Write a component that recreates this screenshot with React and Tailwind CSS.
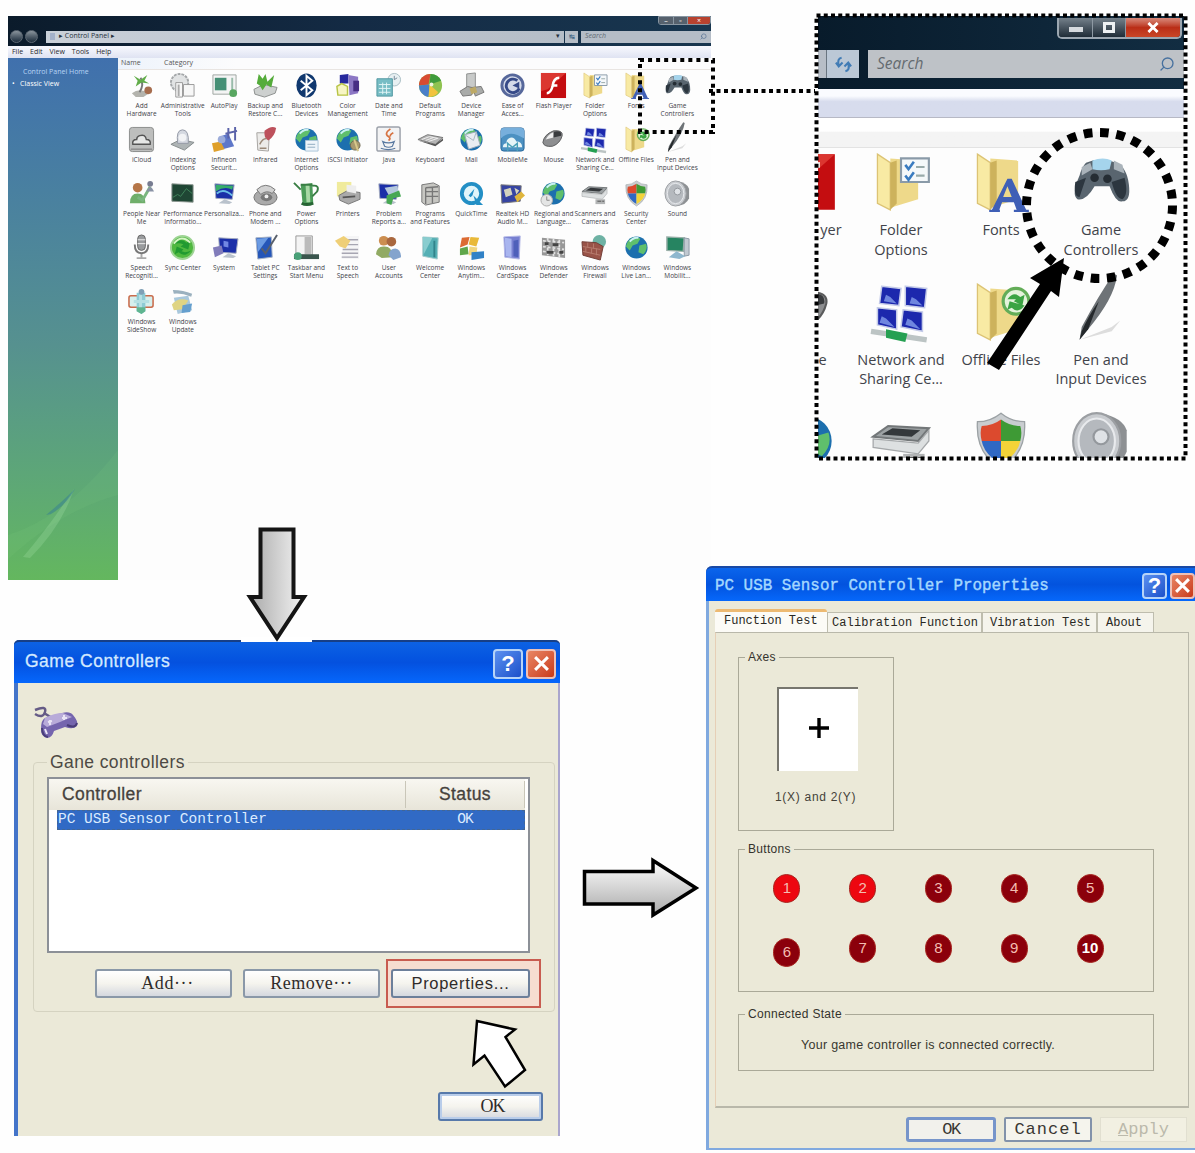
import { Search } from 'lucide-react';

const folder = (
  <>
    <path d="M9 3l13 1v18l-13 4z" fill="#eed98a" />
    <path d="M3 1l6 4v22l-6-3z" fill="#f8eaa4" stroke="#dcc374" strokeWidth=".6" />
    <path d="M9 5l3-1v20l-3 3z" fill="#cdb25c" />
  </>
);

const globe = (
  <>
    <circle cx="14" cy="14" r="11.5" fill="#1c6fae" />
    <path d="M8 5q6-4 10 0l-3 5-5 2-3 5-4-4q1-5 5-8zM17 12l7-2q2 6-3 11l-5-2z" fill="#5fbf6c" />
    <path d="M7 8q4-5 9-4" stroke="#c9f0f5" strokeWidth="2" fill="none" />
  </>
);

const monitor = (
  <>
    <path d="M4 4l20 1-2 15-17-1z" fill="#1b2fa8" stroke="#a4acc0" />
    <path d="M8 24l6-4 8 3-3 2z" fill="#b9c2cc" />
  </>
);

const shield = (
  <>
    <path d="M14 1q5 4 11 4 1 15-11 22Q2 20 3 5q6 0 11-4z" fill="#c9cdd0" stroke="#9ba1a4" strokeWidth=".6" />
    <path d="M14 4v10H5q-1-4 0-7 5 0 9-3z" fill="#dc4a2e" />
    <path d="M14 4v10h9q1-4 0-7-5 0-9-3z" fill="#3e9a35" />
    <path d="M5 14h9v11q-8-5-9-11z" fill="#2f68c4" />
    <path d="M23 14h-9v11q8-5 9-11z" fill="#f3d338" />
  </>
);

const person = (
  <>
    <circle cx="10" cy="8" r="5" fill="#b57648" />
    <path d="M2 24q0-10 8-10t8 10z" fill="#6fae6a" />
  </>
);

const box = (
  <>
    <path d="M5 5l12-2 6 3v17l-14 3-4-3z" fill="#c6c6c2" stroke="#777" />
    <path d="M9 8l13-1M9 12h13M9 17h13M9 8v17M16 8v16" stroke="#777" strokeWidth="1.4" />
  </>
);

const icons = {
  hardware: (
    <>
      <path d="M4 22q8-6 18 0l-6 4H8z" fill="#b3b3ad" />
      <path d="M12 21q5-8 1-15" stroke="#777" strokeWidth="2" fill="none" />
      <path d="M6 4l7 4 7-5-3 6 5 3-8-1-6 4 2-6z" fill="#62ad4a" />
      <circle cx="21" cy="19" r="4" fill="#a66c4d" />
    </>
  ),
  tools: (
    <>
      <circle cx="11" cy="11" r="9" fill="#e1e3e4" stroke="#a4a7a9" strokeWidth="2" strokeDasharray="3 1" />
      <path d="M7 11h7v15H7zM15 13h11v12H15z" fill="#f7f7f7" stroke="#999" />
      <path d="M10 13v12" stroke="#aaa" strokeWidth="2" />
    </>
  ),
  autoplay: (
    <>
      <path d="M2 3h24v20H2z" fill="#f4f4f4" stroke="#9da5a1" />
      <path d="M4 6h12v13H4z" fill="#458f75" />
      <path d="M22 6v14" stroke="#9ba" strokeWidth="2" />
      <circle cx="23" cy="22" r="4" fill="#58a660" />
    </>
  ),
  backup: (
    <>
      <path d="M2 18l10-5 14 3-2 6-11 4-10-3z" fill="#cdd0cf" stroke="#8b8f8e" />
      <path d="M7 2l4 5 3-5 2 8 7-7-3 13-5-3-4 6-3-5-3-2z" fill="#55ac3b" />
    </>
  ),
  bluetooth: (
    <>
      <ellipse cx="14" cy="14" rx="10.5" ry="12.5" fill="#10386f" />
      <path d="M8 9l12 10-6 5V4l6 5L8 19" stroke="#fff" strokeWidth="2" fill="none" />
    </>
  ),
  color: (
    <>
      <path d="M6 3l9-1v10H6z" fill="#26289c" />
      <path d="M15 3l10 2v17l-9 2z" fill="#8c77c4" />
      <path d="M20 9h6v11h-6z" fill="#472d84" />
      <path d="M3 15l5-3 6 3v9H4z" fill="#f7f5c5" stroke="#b8c446" strokeWidth="1.5" />
    </>
  ),
  date: (
    <>
      <circle cx="20" cy="8" r="6.5" fill="#e8f0f2" stroke="#a9bdc4" />
      <path d="M20 4v4l3-2" stroke="#789" fill="none" />
      <path d="M2 7h16v18H2z" fill="#77bdc5" stroke="#5298a1" />
      <path d="M4 13h12M4 17h12M4 21h12M8 11v12M12 11v12" stroke="#e2f5f6" />
    </>
  ),
  defaults: (
    <>
      <circle cx="14" cy="14" r="12" fill="#8fc350" />
      <path d="M14 2a12 12 0 0 0-12 12l10-1z" fill="#d94b32" />
      <path d="M2 14a12 12 0 0 0 10 12l1-13z" fill="#4a7fc9" />
      <path d="M12 26q8-1 10-5l-9-8z" fill="#f1c33e" />
      <path d="M14 2q8 0 11 7l-12 4z" fill="#3f9b3c" />
      <circle cx="15" cy="13" r="2" fill="#eef5dc" />
    </>
  ),
  device: (
    <>
      <path d="M9 2l9-1v15l-9 1z" fill="#c8cac9" stroke="#8e908f" />
      <path d="M2 20l8-5 8 2-4 7-9 1zM15 16l9-1 3 6-9 4z" fill="#a9aba9" stroke="#777" />
      <path d="M12 17l6-2 2 6-6 2z" fill="#bda965" />
    </>
  ),
  ease: (
    <>
      <circle cx="14" cy="14" r="11" fill="#d4dae9" stroke="#57689b" strokeWidth="3" />
      <path d="M19 9a7 7 0 1 0 2 8" fill="none" stroke="#364a88" strokeWidth="3" />
      <path d="M14 14l7-4v7z" fill="#364a88" />
    </>
  ),
  flash: (
    <>
      <path d="M1 1h26v26H1z" fill="#c40d10" />
      <path d="M1 1h26L8 18l-7 2z" fill="#db3630" />
      <path d="M20 6q-6 0-7 9-2 7-6 7M12 14h6" stroke="#fff" strokeWidth="2.6" fill="none" />
    </>
  ),
  folder: (
    <>
      {folder}
      <path d="M14 3h13v11H14z" fill="#f5f8fa" stroke="#8a9aa8" />
      <path d="M16 6l1.5 2L20 4.5M16 11l1.5 2L20 9.5" stroke="#3a7bc0" fill="none" strokeWidth="1.2" />
      <path d="M21 7h4M21 11h4" stroke="#9aa" />
    </>
  ),
  fonts: (
    <>
      {folder}
      <path d="M9.500 27.500l7.500-15h2l7 15h-4.500l-1.500-4h-5.500l-1.500 4zm5.500-6.500h4l-2-5z" fill="#3f5fb6" fillRule="evenodd" />
      <path d="M8.500 27.500h5M20 27.500h7" stroke="#3f5fb6" />
    </>
  ),
  game: (
    <>
      <path d="M7 5q7-3 14 0 5 2 6 10 1 8-3 8-3 1-6-7h-7q-4 7-8 6-3-2 1-11 1-4 3-6z" fill="#59656f" />
      <path d="M10 4q5-2 9 0l-1 4q-4 1-8 0z" fill="#a5d4ec" />
      <path d="M5 7l4-2 1 3-5 3zM20 4l4 2 1 4-5-2z" fill="#aab3ba" />
      <path d="M2 14l5-2-3 9q-3 0-2-7zM19 14l6-2q2 8-1 10-3 0-5-8z" fill="#2c363f" />
      <circle cx="11" cy="12" r="2" fill="#252d34" />
      <circle cx="17" cy="12.5" r="2" fill="#252d34" />
    </>
  ),
  cloud: (
    <>
      <rect x="1.5" y="1.5" width="25" height="25" rx="3" fill="#bdbebd" stroke="#898b8a" />
      <path d="M5 19h18q1-5-4-5-1-6-7-4-3 1-3 4-5 0-4 5z" fill="#e6e7e6" stroke="#555" strokeWidth="1.5" />
      <path d="M3 24h22" stroke="#777" />
    </>
  ),
  indexing: (
    <>
      <path d="M2 19l10-5 14 3-10 8z" fill="#aeb4b5" stroke="#858b8d" />
      <path d="M9 18q-2-14 5-14t6 14z" fill="#d4d8e0" stroke="#9499a6" />
      <circle cx="14" cy="12" r="4" fill="#f2f3f5" />
    </>
  ),
  secure: (
    <>
      <path d="M9 11l9-3 6 13-12 3z" fill="#5e77c9" />
      <path d="M18 2v11M25 1v14M15 8l12-3" stroke="#5a62a9" strokeWidth="2" />
      <path d="M1 18l9-2 4 8-11 3z" fill="#dfa02b" />
      <circle cx="11" cy="14" r="4" fill="#9cacda" />
    </>
  ),
  ehome: (
    <>
      <path d="M5 7h13l-1 19-11-1z" fill="#ecebe9" stroke="#a5a3a0" />
      <path d="M13 5q7-6 12-3-1 8-8 13-5-2-4-10z" fill="#bd515c" />
      <path d="M8 19q3-6 7-6M8 23h7" stroke="#987" fill="none" strokeWidth="1.5" />
    </>
  ),
  internet: (
    <>
      {globe}
      <path d="M13 15h13v11H13z" fill="#eef5fa" stroke="#aac5d8" />
      <path d="M15 19h8M15 22h8" stroke="#8eacc0" />
    </>
  ),
  iscsi: (
    <>
      {globe}
      <circle cx="22" cy="20" r="5" fill="#a99a6e" stroke="#6d6953" />
      <path d="M21 14l4 12" stroke="#d8c98b" strokeWidth="2" />
    </>
  ),
  java: (
    <>
      <rect x="2" y="1" width="24" height="25" rx="2" fill="#f3f3f4" stroke="#9ca1aa" strokeWidth="1.5" />
      <path d="M16 3q-7 5-2 8 3 2 0 4M19 7q-4 2-3 4" stroke="#d77342" fill="none" strokeWidth="1.8" />
      <path d="M8 16q6 3 12 0l-2 5q-4 2-8 0zM6 23q8 3 15 0" stroke="#5878a0" fill="none" strokeWidth="1.2" />
    </>
  ),
  keyboard: (
    <>
      <path d="M1 14l10-5 16 3-8 7z" fill="#b4b4b4" stroke="#777" />
      <path d="M5 14l8-3 9 2M9 15l8-3M12 16l9-3" stroke="#eee" fill="none" />
      <path d="M1 15l18 4 8-6v2l-8 6z" fill="#555" />
    </>
  ),
  mail: (
    <>
      {globe}
      <path d="M7 9l12-3 4 14-12 4z" fill="#e9edf2" stroke="#9eacba" />
      <path d="M7 9l9 6 3-9" fill="none" stroke="#a7b5c2" />
    </>
  ),
  mobile: (
    <>
      <rect x="2" y="2" width="24" height="24" rx="3" fill="#4c91c2" stroke="#27669a" />
      <path d="M2 13q9-10 24 0v-8q0-3-3-3H5q-3 0-3 3z" fill="#77afdc" />
      <path d="M4 22h20q0-6-6-6-3-6-8-3-3 2-2 5-4 0-4 4z" fill="#e6f4f7" />
      <path d="M9 26V18l5 4 5-4v8" stroke="#4aa0b8" fill="none" strokeWidth="1.5" />
    </>
  ),
  mouse: (
    <>
      <path d="M3 17q1-8 11-12 10-1 9 5-2 8-10 11-9 1-10-4z" fill="#8d8e90" stroke="#5a5b5c" />
      <path d="M6 14q2-5 9-8l-1 6z" fill="#eee" />
      <path d="M14 6q9-2 8 4l-8 2z" fill="#393b3e" />
    </>
  ),
  network: (
    <>
      <path d="M5 2l9 1-1 8-9-1zM16 2l10 1-1 9-9-1zM3 12l9 1v9l-9-2zM15 13l9 1v9l-10-2z" fill="#1c28ad" stroke="#c4cbe8" strokeWidth=".7" />
      <path d="M6 9l1-3 2 1 3 3zM18 10l1-3 2 1 3 3zM4 19l1-3 2 1 4 4zM16 20l1-3 2 1 4 4z" fill="#6f86df" />
      <path d="M0 23l26 4" stroke="#bcc4c4" strokeWidth="2.5" />
      <path d="M7 22l10 2-1 4-9-2z" fill="#26a052" />
    </>
  ),
  offline: (
    <>
      {folder}
      <circle cx="21" cy="9" r="6" fill="#e5f3dc" stroke="#63ad58" strokeWidth="1.5" />
      <path d="M17 8q3-4 6-1l2-1-1 5-4-2 1-1M25 11q-3 4-6 1l-2 1 1-4" fill="#3ba443" />
    </>
  ),
  pen: (
    <>
      <path d="M4 27l15-6 4-3-4 5z" fill="#ddd" />
      <path d="M20-4l1.500 1Q20 8 8 22l-4 5 1-6Q13 6 20-4z" fill="#6e7377" />
      <path d="M13 9q-5 7-8 14l-1 4 4-5z" fill="#24282b" />
    </>
  ),
  people: (
    <>
      {person}
      <path d="M10 18l5 3 8-14" stroke="#7ab77f" strokeWidth="3" fill="none" />
      <circle cx="23" cy="4" r="3" fill="#777c91" />
      <path d="M19 12q4-9 8 0" fill="#8992a5" />
    </>
  ),
  performance: (
    <>
      <path d="M3 4l22 1v18L3 22z" fill="#1f4634" stroke="#8b9690" />
      <path d="M4 18l5-3 3 2 6-8 6 5" stroke="#41845c" fill="none" />
    </>
  ),
  personalize: (
    <>
      {monitor}
      <path d="M5 5l18 1-1 4q-8-4-17 2z" fill="#37ad69" />
      <path d="M6 14q7-6 16 2" stroke="#69bce6" strokeWidth="2" fill="none" />
    </>
  ),
  phone: (
    <>
      <ellipse cx="14" cy="18" rx="12" ry="8" fill="#aaa" stroke="#777" />
      <path d="M5 10q9-9 19 0l-3 4q-6-4-12 1z" fill="#d1d1d1" stroke="#777" />
      <ellipse cx="15" cy="18" rx="6" ry="4" fill="#777" />
      <circle cx="15" cy="17" r="2" fill="#eee" />
    </>
  ),
  power: (
    <>
      <path d="M8 5l12-2 1 21-11 1z" fill="#4b9b58" />
      <path d="M13 5l4-1 1 19h-4z" fill="#a8d8a5" />
      <path d="M20 6q8-1 5 6l-5 5M8 10L1 3M8 5h12" stroke="#387d43" strokeWidth="2" fill="none" />
      <path d="M9 24q5 3 12 0" stroke="#276634" strokeWidth="3" />
    </>
  ),
  printers: (
    <>
      <path d="M3 2h15v15H3z" fill="#f0eb9c" />
      <path d="M5 16l9-5 13 2v7l-12 5-9-4z" fill="#aaa" stroke="#777" />
      <path d="M13 5l10 1v8l-10-2z" fill="#eee" />
      <path d="M9 18l13-1" stroke="#555" strokeWidth="2" />
    </>
  ),
  problem: (
    <>
      {monitor}
      <path d="M10 8l13-2 2 8-10 3z" fill="#b4c8dd" />
      <path d="M12 16l13-5 2 6-8 2-2 7-5-2z" fill="#48a854" />
    </>
  ),
  box,
  quicktime: (
    <>
      <circle cx="14" cy="14" r="10" fill="#e1f5fa" stroke="#238fc5" strokeWidth="4" />
      <path d="M11 16l6-7-2 7-2 2zM16 16l10 10h-7z" fill="#238fc5" />
    </>
  ),
  realtek: (
    <>
      <path d="M2 5l21 1-1 16-19 2z" fill="#3644a2" stroke="#777" />
      <path d="M5 10l7-2 2 7-7 3zM16 8l5 3-3 4z" fill="#d4d2bd" />
      <path d="M16 17l7-5 4 4-8 7z" fill="#dfb53c" />
    </>
  ),
  regional: (
    <>
      {globe}
      <circle cx="7" cy="21" r="6" fill="#e4e5e5" stroke="#aaa" />
      <path d="M7 17v4h3" stroke="#888" fill="none" />
    </>
  ),
  scanner: (
    <>
      <path d="M1 12l7-5 19 1-5 6z" fill="#9da2a4" stroke="#737779" />
      <path d="M5 11l5-3 13 1-4 3z" fill="#34383b" />
      <path d="M1 13l21 2 5-6v5l-5 6-21-3z" fill="#dde0e1" stroke="#a5a8aa" strokeWidth=".6" />
      <path d="M15 20h10v5H15z" fill="#b2b4b5" />
      <path d="M17 22h4M22 22h2" stroke="#555" />
    </>
  ),
  shield,
  sound: (
    <>
      <path d="M14 1q10 2 12 8v10q-3 7-12 8z" fill="#8d9093" />
      <ellipse cx="12" cy="14" rx="11" ry="13" fill="#c9ccd0" stroke="#9c9fa3" />
      <ellipse cx="12" cy="14" rx="8.5" ry="10.5" fill="#b5b9be" stroke="#e8eaed" />
      <circle cx="14" cy="12" r="3.5" fill="#dfe2e6" stroke="#94989d" />
    </>
  ),
  speech: (
    <>
      <path d="M14 20v6M9 25h10" stroke="#aaa" strokeWidth="2" />
      <path d="M7 11q0 9 7 9t7-9" fill="none" stroke="#777" strokeWidth="2" />
      <rect x="10" y="1" width="8" height="16" rx="4" fill="#9a9c9e" stroke="#666" />
      <path d="M10 6h8M10 10h8" stroke="#eee" />
    </>
  ),
  sync: (
    <>
      <circle cx="14" cy="14" r="12" fill="#4fb83f" stroke="#9ed494" strokeWidth="2" />
      <path d="M5 11q7-8 13-2l4-2-2 9-8-3 3-2q-5-3-10 0zM23 17q-7 8-13 2l-4 2 2-8 7 3-2 2q4 2 10-1z" fill="#219a31" />
      <path d="M5 10q8-10 17-1" stroke="#d5f4c5" fill="none" strokeWidth="2" />
    </>
  ),
  system: (
    <>
      <g transform="translate(4 0)">{monitor}</g>
      <path d="M2 14l9-2 2 8-9 4z" fill="#817cba" />
      <path d="M13 7l5 1v6l-5-1z" fill="#7187e3" />
    </>
  ),
  tablet: (
    <>
      <path d="M4 4l16-1 1 21-15 2z" fill="#2556b8" stroke="#aab5c7" />
      <path d="M5 5l12-1-11 15z" fill="#6b9be3" />
      <path d="M10 15l4 5L26 1" stroke="#59606b" strokeWidth="2" fill="none" />
    </>
  ),
  taskbar: (
    <>
      <path d="M3 2h17v20H3z" fill="#f4f4f4" stroke="#999" />
      <path d="M12 3h7v18h-7z" fill="#bbb" />
      <path d="M1 21h26v5H1z" fill="#3a554d" />
      <circle cx="5" cy="23" r="4" fill="#48a077" />
    </>
  ),
  text: (
    <>
      <path d="M10 2h16v24H8z" fill="#f5f5f6" />
      <path d="M13 6h12M12 11h13M9 16h16M8 20h17M8 24h17" stroke="#a7a6b2" strokeWidth="1.5" />
      <path d="M1 7l9-5 7 5-5 8-6-2z" fill="#efcf77" />
    </>
  ),
  users: (
    <>
      <circle cx="9" cy="7" r="5" fill="#cc8e50" />
      <circle cx="17" cy="8" r="5" fill="#a9673e" />
      <path d="M1 21q1-9 9-8 8 0 8 11l-11 1z" fill="#91aa63" />
      <path d="M14 22q1-7 7-7 6 1 6 9l-8 3z" fill="#84a4cd" />
    </>
  ),
  welcome: (
    <>
      <path d="M6 3l16 1-1 22-15-3z" fill="#55b0b5" stroke="#a7cccd" />
      <path d="M6 3l10 1-9 17z" fill="#89cdcf" />
      <path d="M18 7v17" stroke="#32848b" strokeWidth="2" />
    </>
  ),
  anytime: (
    <>
      <path d="M4 4l8-1-2 8-8 3z" fill="#dc6b32" />
      <path d="M13 3l9 1-3 9-8-2z" fill="#e9b939" />
      <path d="M2 15l8-2 1 8-9 1z" fill="#5fa74b" />
      <path d="M12 13l8 1-1 8h-8z" fill="#f0d57e" />
      <path d="M14 19l13-1v7l-13 2z" fill="#3181c6" />
    </>
  ),
  cardspace: (
    <>
      <path d="M5 3l17-1-1 24-15-2z" fill="#7780d1" stroke="#b4b8e6" />
      <path d="M6 4l7 1v19l-6-1z" fill="#a9b5ef" />
      <path d="M15 7l5-1v18l-5-1z" fill="#4e60ba" />
    </>
  ),
  defender: (
    <>
      <path d="M2 4l24 2v19L2 22z" fill="#989898" />
      <path d="M3 7l22 2M3 13l22 3M3 18l22 3M8 4v18M14 5v18M20 6v18" stroke="#e2e2e2" strokeDasharray="3 2" strokeWidth="1.8" />
      <path d="M5 10h4M13 11h6M7 19h7M20 19h4" stroke="#444" strokeWidth="3" />
    </>
  ),
  firewall: (
    <>
      <circle cx="19" cy="8" r="7" fill="#6eb2a4" />
      <path d="M1 8l15 1 7 4-3 14-18-5z" fill="#995348" stroke="#713c35" />
      <path d="M2 13l18 3M2 18l18 4M7 9v5M13 10v5M5 14v5M11 15v5M16 15v7" stroke="#b77c6e" />
    </>
  ),
  globe,
  mobility: (
    <>
      <path d="M3 3l18 1-1 14-17-1z" fill="#268461" stroke="#9ab0a9" strokeWidth="1.5" />
      <path d="M21 4l5 1v17l-5 1z" fill="#c1c9d1" stroke="#8d99a6" />
      <path d="M5 24l8-6 9 5-6 3z" fill="#8eb7ce" />
    </>
  ),
  sidebar: (
    <>
      <rect x="1" y="8" width="25" height="12" rx="2" fill="#d6efed" stroke="#c96c4c" strokeWidth="1.6" />
      <path d="M9 5h9v19l-4 3-5-3z" fill="#8ecbd4" />
      <path d="M6 14h16M13 7v18" stroke="#b6e0e3" strokeWidth="3" />
      <path d="M9 20h9v4l-4 3-5-3z" fill="#5fb590" />
      <circle cx="14" cy="4" r="3" fill="#7fa0b6" />
    </>
  ),
  update: (
    <>
      <path d="M4 2q11 0 20 4l-1 3Q13 5 5 6z" fill="#9bb1bf" />
      <path d="M5 10l15-2 4 15-15 4z" fill="#a9c8dc" />
      <path d="M3 17q7-8 17-4l-6 9-9 1z" fill="#dfd483" />
      <path d="M14 18l10-2-2 9-9 1z" fill="#659fce" />
    </>
  ),
};

const panelItems = [
  ['hardware', 'Add\nHardware'], ['tools', 'Administrative\nTools'], ['autoplay', 'AutoPlay'], ['backup', 'Backup and\nRestore C...'],
  ['bluetooth', 'Bluetooth\nDevices'], ['color', 'Color\nManagement'], ['date', 'Date and\nTime'], ['defaults', 'Default\nPrograms'],
  ['device', 'Device\nManager'], ['ease', 'Ease of\nAcces...'], ['flash', 'Flash Player'], ['folder', 'Folder\nOptions'],
  ['fonts', 'Fonts'], ['game', 'Game\nControllers'],
  ['cloud', 'iCloud'], ['indexing', 'Indexing\nOptions'], ['secure', 'Infineon\nSecurit...'], ['ehome', 'Infrared'],
  ['internet', 'Internet\nOptions'], ['iscsi', 'iSCSI Initiator'], ['java', 'Java'], ['keyboard', 'Keyboard'],
  ['mail', 'Mail'], ['mobile', 'MobileMe'], ['mouse', 'Mouse'], ['network', 'Network and\nSharing Ce...'],
  ['offline', 'Offline Files'], ['pen', 'Pen and\nInput Devices'],
  ['people', 'People Near\nMe'], ['performance', 'Performance\nInformatio...'], ['personalize', 'Personaliza...'], ['phone', 'Phone and\nModem ...'],
  ['power', 'Power\nOptions'], ['printers', 'Printers'], ['problem', 'Problem\nReports a...'], ['box', 'Programs\nand Features'],
  ['quicktime', 'QuickTime'], ['realtek', 'Realtek HD\nAudio M...'], ['regional', 'Regional and\nLanguage...'], ['scanner', 'Scanners and\nCameras'],
  ['shield', 'Security\nCenter'], ['sound', 'Sound'],
  ['speech', 'Speech\nRecogniti...'], ['sync', 'Sync Center'], ['system', 'System'], ['tablet', 'Tablet PC\nSettings'],
  ['taskbar', 'Taskbar and\nStart Menu'], ['text', 'Text to\nSpeech'], ['users', 'User\nAccounts'], ['welcome', 'Welcome\nCenter'],
  ['anytime', 'Windows\nAnytim...'], ['cardspace', 'Windows\nCardSpace'], ['defender', 'Windows\nDefender'], ['firewall', 'Windows\nFirewall'],
  ['globe', 'Windows\nLive Lan...'], ['mobility', 'Windows\nMobilit...'],
  ['sidebar', 'Windows\nSideShow'], ['update', 'Windows\nUpdate'],
];

const zoomItems = [
  ['flash', 'yer', 'ml-[60px]'], ['folder', 'Folder\nOptions'], ['fonts', 'Fonts'], ['game', 'Game\nControllers'],
  ['mouse', 'e', 'ml-[43px]'], ['network', 'Network and\nSharing Ce...'], ['offline', 'Offline Files'], ['pen', 'Pen and\nInput Devices'],
  ['globe', ''], ['scanner', ''], ['shield', ''], ['sound', ''],
];

function Icon({ name, className }) {
  return <svg viewBox="0 0 28 28" className={`block overflow-visible ${className}`}>{icons[name]}</svg>;
}

function ControlPanel() {
  return (
    <section className="flex h-[564px] w-[703px] flex-col bg-[#fdfdfd] font-['Open_Sans',sans-serif]">
      <header className="flex h-[30px] flex-col bg-linear-to-r from-[#0b1b2b] via-[#142b45] to-[#18364f]">
        <div className="flex h-[14px] justify-end">
          <div className="flex h-[9px] w-[53px] overflow-hidden rounded-b-[3px] border border-[#8996a2] text-[7px] leading-[7px] text-white">
            <span className="w-[14px] bg-[#56616d] text-center">–</span>
            <span className="w-[15px] border-x border-[#8996a2] bg-[#56616d] text-center">▫</span>
            <span className="flex-1 bg-[#b8422f] text-center">×</span>
          </div>
        </div>
        <div className="flex h-[13px] items-center">
          <span className="ml-0.5 h-[13px] w-[13px] rounded-full border border-[#5d6873] bg-linear-to-b from-[#8b959d] to-[#1d2d3c]" />
          <span className="ml-0.5 h-[13px] w-[13px] rounded-full border border-[#5d6873] bg-linear-to-b from-[#8b959d] to-[#1d2d3c]" />
          <div className="ml-[8px] flex h-[12px] flex-1 items-center bg-linear-to-r from-[#c9d0d9] to-[#b5bdc7] px-1 text-[7px] text-[#26313d]">
            <span className="mr-1 h-[7px] w-[5px] bg-[#a3b1ca]" />
            <span>▸ Control Panel ▸</span>
            <span className="ml-auto">▾</span>
          </div>
          <span className="ml-px h-[12px] w-[13px] bg-[#b5bdc7] text-center text-[7px] leading-[12px] text-[#315a7d]">↹</span>
          <div className="ml-[3px] flex h-[12px] w-[130px] items-center justify-between bg-[#b5bdc7] px-1 text-[7px] italic text-[#626b74]">
            Search
            <Search className="h-[7px] w-[7px] -scale-x-100 text-[#4b698e]" />
          </div>
        </div>
      </header>
      <nav className="flex h-[12px] shrink-0 items-center gap-[7px] bg-linear-to-b from-[#f8f9fe] to-[#dfe3f2] pl-1 text-[7px] leading-[12px] text-[#27282c]">
        <span>File</span><span>Edit</span><span>View</span><span>Tools</span><span>Help</span>
      </nav>
      <div className="flex min-h-0 flex-1">
        <aside className="relative w-[110px] overflow-hidden bg-linear-to-b from-[#4070ad] via-[#56918f] via-55% to-[#64b75e] pt-[8px] text-[7px] leading-[12px] text-[#dcecff]">
          <p className="ml-[15px] text-[#b7d4f4]">Control Panel Home</p>
          <p className="ml-[4px] text-white">•&nbsp;&nbsp; Classic View</p>
          <svg viewBox="0 0 110 200" className="absolute bottom-0 left-0 h-[200px] w-[110px]">
            <path d="M0 155Q58 137 110 70v45Q54 130 0 179z" fill="#8ed38b" opacity=".1" />
            <path d="M15 177Q40 148 66 109 54 146 22 178z" fill="#b8efb4" opacity=".22" />
            <path d="M38 135Q55 121 67 109 57 126 43 134z" fill="#347d96" opacity=".5" />
          </svg>
        </aside>
        <div className="flex-1">
          <div className="flex h-[12px] items-center border-b border-[#e9e5e2] bg-linear-to-r from-[#edf3fb] via-[#fcfcfd] via-20% to-[#fcfcfd] text-[7px] text-[#555]">
            <span className="w-[43px] pl-[3px]">Name</span><span className="pl-[3px]">Category</span>
          </div>
          <div className="ml-[3px] mt-[2px] grid w-[577px] grid-cols-14">
            {panelItems.map(([icon, label], i) => (
              <div key={i} className="flex h-[54px] flex-col items-center">
                <Icon name={icon} className="h-[27px] w-[27px]" />
                <span className="mt-[3px] whitespace-pre text-center text-[6.5px] leading-[8px] text-[#42434a]">{label}</span>
              </div>
            ))}
          </div>
        </div>
      </div>
    </section>
  );
}

function ZoomPanel() {
  return (
    <section className="ml-[112px] mt-[16px] h-[442px] w-[366px] overflow-hidden bg-[#fdfdfd] font-['Open_Sans',sans-serif]">
      <header className="h-[73px] bg-linear-to-r from-[#081b2b] to-[#122d42] pt-[2px]">
        <div className="ml-[239px] flex h-[21px] w-[125px] overflow-hidden rounded-b-[5px] border-2 border-t-0 border-[#9ca7b1] text-white">
          <span className="flex w-[34px] items-center justify-center border-r border-[#8e99a3] bg-linear-to-b from-[#75818b] to-[#202d38]"><span className="mt-1 h-[5px] w-[14px] bg-[#d6dade]" /></span>
          <span className="flex w-[33px] items-center justify-center border-r border-[#8e99a3] bg-linear-to-b from-[#75818b] to-[#202d38]"><span className="h-[11px] w-[12px] border-[3px] border-[#eef1f3]" /></span>
          <span className="flex flex-1 items-center justify-center bg-linear-to-b from-[#d8897a] via-[#ba2e17] to-[#c94626]">
            <svg viewBox="0 0 12 12" className="h-[11px] w-[12px]"><path d="M1 1l10 10M11 1L1 11" stroke="white" strokeWidth="3" /></svg>
          </span>
        </div>
        <div className="mt-[11px] flex h-[28px]">
          <span className="w-[9px] border-r border-[#697580] bg-[#b7bec7]" />
          <span className="flex w-[32px] items-center justify-center bg-[#bbc8d6]">
            <svg viewBox="0 0 20 20" className="h-[19px] w-[19px]"><path d="M8 3Q3 4 5 11M2 8l3 4 4-4M12 17q5-1 3-8M11 12l4-4 3 4" stroke="#417cb5" strokeWidth="2.2" fill="none" /></svg>
          </span>
          <div className="ml-[9px] flex w-[316px] items-center justify-between bg-[#bec2c7] pl-[9px] pr-[9px] text-[15.5px] italic text-[#656b70]">
            Search
            <Search className="h-[16px] w-[16px] -scale-x-100 text-[#47719f]" />
          </div>
        </div>
      </header>
      <div className="h-[29px] border-b border-[#b7b9c5] bg-linear-to-b from-[#fafbff] from-25% to-[#d7dced] to-45%" />
      <div className="h-[30px] border-b border-[#e3e3e3] bg-linear-to-b from-white from-45% to-[#f4f4f4] to-50%" />
      <div className="ml-[-67px] mt-[4px] grid w-[400px] grid-cols-4">
        {zoomItems.map(([icon, label, shift], i) => (
          <div key={i} className="flex h-[129.5px] flex-col items-center">
            <Icon name={icon} className={`h-[60px] w-[60px] ${i % 4 === 0 ? 'ml-[12px]' : ''}`} />
            <span className={`mt-[8px] whitespace-pre text-center text-[14.5px] leading-[19.5px] text-[#41434a] ${shift || ''}`}>{label}</span>
          </div>
        ))}
      </div>
    </section>
  );
}

function TitleButtons({ size }) {
  return (
    <div className="flex gap-[3px]">
      <span className={`flex items-center justify-center rounded-[4px] border-2 border-[#b6d4f8] bg-linear-to-br from-[#5b90f0] to-[#1c50ca] font-['Liberation_Sans',sans-serif] text-[22px] font-bold leading-none text-white ${size}`}>?</span>
      <span className={`flex items-center justify-center rounded-[4px] border-2 border-[#efc1b6] bg-linear-to-br from-[#e88563] to-[#c93817] ${size}`}>
        <svg viewBox="0 0 16 16" className="h-[17px] w-[17px]"><path d="M2 2l12 12M14 2L2 14" stroke="white" strokeWidth="2.8" /></svg>
      </span>
    </div>
  );
}

function XpButton({ className, children }) {
  return (
    <button className={`flex h-[29px] items-center justify-center rounded-[3px] border-2 bg-linear-to-b from-white via-[#f5f4ee] to-[#d5d8df] text-[#2f2b2a] ${className}`}>
      {children}
    </button>
  );
}

function GameControllers() {
  return (
    <section className="ml-[14px] mt-[60px] h-[496px] w-[546px] rounded-t-[5px] border-l-4 border-r-2 border-l-[#4474c9] border-r-[#aaa6cd] bg-[#ebe9d8] font-['Liberation_Sans',sans-serif]">
      <header className="-ml-1 -mr-0.5 flex h-[43px] items-center justify-between rounded-t-[5px] border-t-2 border-[#173f86] bg-linear-to-b from-[#0d62e4] via-[#0451df] to-[#0667fc] pl-[11px] pr-[4px] pt-0.5">
        <h2 className="mb-1 text-[17.5px] tracking-[0.5px] text-[#d3e9ff] [-webkit-text-stroke:0.3px]">Game Controllers</h2>
        <TitleButtons size="h-[30px] w-[30px]" />
      </header>
      <svg viewBox="0 0 46 33" className="ml-[15px] mt-[23px] h-[33px] w-[46px]">
        <path d="M2 4q12-5 10 2T2 8M11 7l8 5" fill="none" stroke="#655b86" strokeWidth="2.5" />
        <path d="M12 12q9-3 17-5 8-2 11 2 6 7 4 11-4 4-12 1l-11 4q-2 7-7 7-6-1-6-9 0-9 4-11z" fill="#7565ae" />
        <path d="M12 12q9-5 18-5l9 4-12 5-13 5-4-3z" fill="#b8abd9" />
        <path d="M15 16l4-1M17 14v5M29 12h5M31 9v5M12 23l2 5" stroke="#e9e4f5" strokeWidth="2" />
        <path d="M9 22q0 8 6 9M34 19q8 4 10-2" fill="none" stroke="#493d79" strokeWidth="2" />
      </svg>
      <fieldset className="ml-[15px] mt-[13px] h-[260px] w-[513px] rounded-[4px] border border-[#d5d3c1] px-[13px]">
        <legend className="px-[3px] text-[17.5px] leading-[20px] tracking-[0.4px] text-[#4d4a44]">Gane controllers</legend>
        <div className="mt-[5px] h-[176px] w-[483px] border-2 border-[#8c9097] bg-white pr-[3px]">
          <div className="flex h-[31px] items-center bg-linear-to-b from-[#f8f7f1] to-[#e8e5d9] text-[17.5px] tracking-[0.4px] text-[#45413c] [-webkit-text-stroke:0.3px]">
            <span className="w-[357px] border-r border-[#c9c6b8] pl-[13px]">Controller</span>
            <span className="flex-1 border-r border-[#c9c6b8] text-center">Status</span>
          </div>
          <div className="ml-[8px] flex h-[20px] items-center border border-dashed border-[#426695] bg-[#316ac5] font-['Liberation_Mono',monospace] text-[14.5px] text-[#dcecff]">
            <span className="w-[348px]">PC USB Sensor Controller</span>
            <span className="flex-1 text-center tracking-[-1px]">OK</span>
          </div>
        </div>
        <div className="mt-[6px] flex h-[48px] items-center gap-[11px] pl-[48px] font-['Liberation_Serif',serif] text-[18px]">
          <XpButton className="w-[137px] border-[#8a98a8] pl-2 tracking-[0.6px]">Add···</XpButton>
          <XpButton className="w-[137px] border-[#8a98a8] tracking-[0.5px]">Remove···</XpButton>
          <div className="-ml-[5px] flex h-[49px] w-[155px] shrink-0 items-center border-2 border-[#c85c50] bg-[#f6ddd0] pl-[3px]">
            <XpButton className="w-[139px] border-[#6c7f9a] font-['Liberation_Sans',sans-serif] text-[16.5px] tracking-[0.7px]">Properties...</XpButton>
          </div>
        </div>
      </fieldset>
      <div className="mt-[80px] flex justify-end pr-[15px] font-['Liberation_Serif',serif] text-[18px]">
        <XpButton className="w-[105px] border-[#5779aa] pl-1 tracking-[-1px] shadow-[inset_0_0_0_2px_#b9cdea]">OK</XpButton>
      </div>
    </section>
  );
}

function Group({ title, className, children }) {
  return (
    <fieldset className={`border border-[#aaa998] ${className}`}>
      <legend className="ml-[6px] px-[3px] text-[12px] leading-[16px] tracking-[0.3px] text-[#34332d]">{title}</legend>
      {children}
    </fieldset>
  );
}

function Properties() {
  return (
    <section className="mt-[108px] h-[584px] w-[489px] rounded-tl-[6px] border-b-2 border-l-[3px] border-[#80a9df] bg-[#ebe9d8] font-['Liberation_Sans',sans-serif]">
      <header className="-ml-[3px] flex h-[35px] items-center justify-between rounded-tl-[6px] border-t-2 border-[#1949a5] bg-linear-to-b from-[#0b65ec] via-[#0353de] to-[#0668fb] pl-[9px]">
        <h2 className="mt-1 whitespace-nowrap font-['Liberation_Mono',monospace] text-[15.9px] text-[#a5d8ff] [-webkit-text-stroke:0.4px]">PC USB Sensor Controller Properties</h2>
        <div className="mt-0.5"><TitleButtons size="h-[26px] w-[25px]" /></div>
      </header>
      <nav className="ml-[6px] mt-[9px] flex h-[22px] items-end font-['Liberation_Mono',monospace] text-[12px] text-[#292823]">
        <span className="h-[23px] w-[112px] rounded-t-[3px] border-t-[3px] border-[#edba72] bg-[#fcfbf6] pl-[9px] leading-[18px]">Function Test</span>
        <span className="h-[20px] w-[155px] border border-b-0 border-[#bebdae] bg-[#f5f4ec] pl-[4px] leading-[21px] tracking-[0.1px]">Calibration Function</span>
        <span className="h-[20px] w-[115px] border border-b-0 border-[#bebdae] bg-[#f5f4ec] pl-[7px] leading-[21px]">Vibration Test</span>
        <span className="h-[20px] w-[57px] border border-b-0 border-[#bebdae] bg-[#f5f4ec] pl-[8px] leading-[21px]">About</span>
      </nav>
      <div className="ml-[6px] h-[476px] w-[474px] border border-b-2 border-[#b9b8aa] border-l-[#e6cfb6] pl-[22px] pt-[16px]">
        <Group title="Axes" className="h-[182px] w-[156px]">
          <div className="ml-[38px] mt-[22px] flex h-[84px] w-[81px] items-center justify-center border-l-2 border-t-2 border-[#77766e] bg-white pb-[4px]">
            <svg viewBox="0 0 20 20" className="h-[20px] w-[20px]"><path d="M10 0v20M0 10h20" stroke="black" strokeWidth="3.4" /></svg>
          </div>
          <p className="ml-[36px] mt-[18px] text-[12px] leading-[16px] tracking-[0.7px] text-[#444238]">1(X) and 2(Y)</p>
        </Group>
        <Group title="Buttons" className="mt-[10px] h-[151px] w-[416px]">
          <div className="ml-[10px] mt-[17px] grid w-[379px] grid-cols-5">
            {Array.from({ length: 10 }, (_, i) => i + 1).map((n) => (
              <div key={n} className={`flex h-[60px] items-start justify-center ${n === 6 ? 'pt-[4px]' : ''}`}>
                <span className={`flex h-[29px] w-[27px] items-center justify-center rounded-full border border-[#a72620] text-[15px] text-[#f3bdb1] ${n < 3 ? 'bg-[#ed0710]' : 'bg-[#8b000b]'} ${n === 10 ? 'font-bold text-white' : ''}`}>{n}</span>
              </div>
            ))}
          </div>
        </Group>
        <Group title="Connected State" className="mt-[14px] h-[65px] w-[416px]">
          <p className="ml-[62px] mt-[14px] text-[12.5px] leading-[18px] tracking-[0.28px] text-[#38372f]">Your game controller is connected correctly.</p>
        </Group>
      </div>
      <div className="mt-[9px] flex justify-end gap-[8px] pr-[8px] font-['Liberation_Mono',monospace] text-[17px] text-[#393733]">
        <button className="h-[25px] w-[90px] rounded-[3px] border-[3px] border-[#7795ca] bg-[#f2f1ec] leading-[19px] tracking-[-1.5px]">OK</button>
        <button className="h-[25px] w-[88px] rounded-[2px] border-2 border-[#8292aa] bg-[#f5f4ed] leading-[21px] tracking-[1px]">Cancel</button>
        <button className="h-[25px] w-[87px] border border-[#e1dfd0] bg-[#f2f0e2] leading-[21px] text-[#bbb9ab]"><u>A</u>pply</button>
      </div>
    </section>
  );
}

function Callouts() {
  return (
    <svg viewBox="0 0 1195 1153" className="pointer-events-none absolute inset-0 h-[1153px] w-[1195px]">
      <defs>
        <linearGradient id="down"><stop stopColor="#aaa" /><stop offset="1" stopColor="#f4f4f4" /></linearGradient>
        <linearGradient id="right" x2="0" y2="1"><stop stopColor="#fff" /><stop offset="1" stopColor="#aaa" /></linearGradient>
      </defs>
      <g fill="none" stroke="black">
        <rect x="640" y="60" width="73" height="72" strokeWidth="4" strokeDasharray="4 4.055" />
        <path d="M709 91h106" strokeWidth="4" strokeDasharray="4 3.5" />
        <rect x="816.5" y="15.5" width="369" height="443" strokeWidth="4" strokeDasharray="4 3.25" />
        <circle cx="1099.5" cy="205.5" r="73" strokeWidth="9" strokeDasharray="8.7 7.681" />
      </g>
      <path d="M1064 258l-34 20 10 6-53 79 12 7 52-79 8 6z" />
      <path d="M241 637h71v5h-71z" fill="white" />
      <path d="M260.5 529.5h33V597h10.5l-27 41-27-41h10.5z" fill="url(#down)" stroke="#151515" strokeWidth="4" />
      <path d="M584.5 871.5H653V860.5l43 27.5-43 27v-11H584.5z" fill="url(#right)" stroke="black" strokeWidth="3.5" />
      <path d="M477 1021l38 8.500-9.500 7.500 19.500 33-20 16.500-20.500-31-11 9z" fill="white" stroke="black" strokeWidth="2.5" />
    </svg>
  );
}

export default function App() {
  return (
    <main className="relative flex h-[1153px] w-[1195px] overflow-hidden bg-[#fefefe]">
      <div className="w-[706px] shrink-0 pt-[16px]">
        <div className="ml-[8px]"><ControlPanel /></div>
        <GameControllers />
      </div>
      <div className="w-[489px] shrink-0">
        <ZoomPanel />
        <Properties />
      </div>
      <Callouts />
    </main>
  );
}
